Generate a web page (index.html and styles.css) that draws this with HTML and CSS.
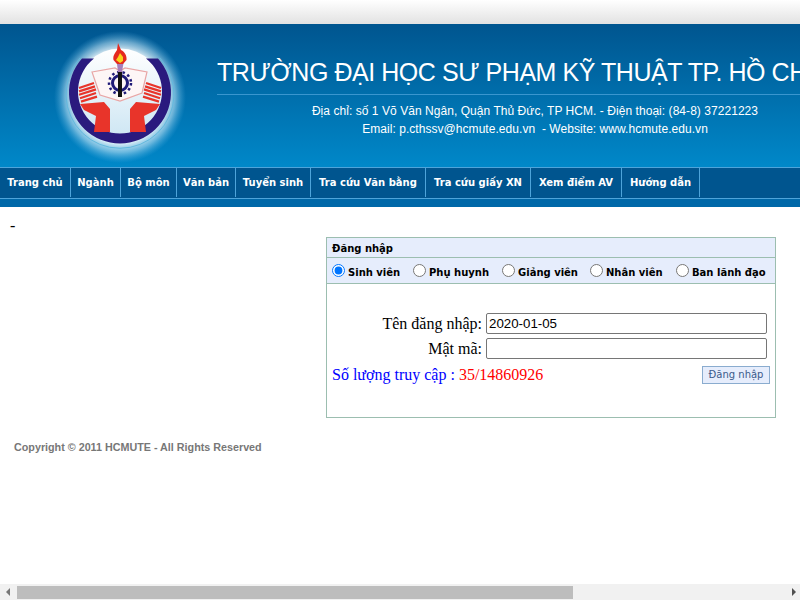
FILE: index.html
```html
<!DOCTYPE html>
<html lang="vi">
<head>
<meta charset="utf-8">
<title>Đăng nhập</title>
<link rel="stylesheet" href="styles.css">
</head>
<body>
<div class="page">
  <div class="topbar"></div>
  <header class="banner">
    <svg class="logo" width="217" height="143" viewBox="0 24 217 143" aria-hidden="true">
      <defs>
        <radialGradient id="glow" cx="120" cy="97" r="66" gradientUnits="userSpaceOnUse">
          <stop offset="0" stop-color="#fff"/>
          <stop offset="0.68" stop-color="#fff" stop-opacity="0.95"/>
          <stop offset="0.84" stop-color="#bfe4f6" stop-opacity="0.55"/>
          <stop offset="1" stop-color="#60b8e6" stop-opacity="0"/>
        </radialGradient>
        <linearGradient id="inner" x1="0" y1="0" x2="0" y2="1">
          <stop offset="0" stop-color="#fff"/>
          <stop offset="1" stop-color="#cfe7f4"/>
        </linearGradient>
      </defs>
      <circle cx="120" cy="97" r="66" fill="url(#glow)"/>
      <path d="M80 58A54 54 0 1 0 160 58" fill="none" stroke="#62b9de" stroke-width="1"/>
      <circle cx="120" cy="91.500" r="43" fill="url(#inner)"/>
      <path d="M82 58.500A51 51 0 1 0 158 58.500H146A42 42 0 1 1 94 58.500Z" fill="#2a1a7e"/>
      <path d="M92 72L115 68L120 71L125 68L147 72L142 93L120 101L100 95Z" fill="#fdf6f6" stroke="#e9a6a6" stroke-width="1.200"/>
      <g fill="none" stroke="#e8342a" stroke-width="2.200">
        <path d="M79 88L94 83M79 91.400L95 86.400M79 94.800L96 89.400M80 98.200L96 93M81 101.600L97 96.600"/>
        <path d="M161 88L146 83M161 91.400L145 86.400M161 94.800L144 89.400M160 98.200L144 93M159 101.600L143 96.600"/>
      </g>
      <g fill="#e8342a">
        <path d="M80 104L104 102L110 109V132L94 132L96 116L84 110Z"/>
        <path d="M160 104L136 102L130 109V132L146 132L144 116L156 110Z"/>
      </g>
      <g fill="none" stroke="#1f1a78">
        <circle cx="120" cy="83" r="7.500" stroke-width="3"/>
        <circle cx="120" cy="83" r="11" stroke-width="2.500" stroke-dasharray="2.500 2.900"/>
      </g>
      <rect x="118" y="66" width="4" height="31" fill="#111"/>
      <path d="M116.500 60H124L122 72H118Z" fill="#a77db8"/>
      <path d="M118 43L121 50C125 52 127 56 126.500 60L123 64H117L113.500 60C112.500 55 116 52 117 50Z" fill="#e5291f"/>
      <path d="M120 53L123 57L123 61L120 63L116 60L118 57Z" fill="#f8d21c"/>
    </svg>
    <div class="heading">
      <h1 class="school">TRƯỜNG ĐẠI HỌC SƯ PHẠM KỸ THUẬT TP. HỒ CHÍ MINH</h1>
      <p class="info">Địa chỉ: số 1 Võ Văn Ngân, Quận Thủ Đức, TP HCM. - Điện thoại: (84-8) 37221223</p>
      <p class="info">Email: p.cthssv@hcmute.edu.vn&nbsp; - Website: www.hcmute.edu.vn</p>
    </div>
  </header>
  <nav class="menu">
    <a class="menu-item" href="#">Trang chủ</a>
    <a class="menu-item" href="#">Ngành</a>
    <a class="menu-item" href="#">Bộ môn</a>
    <a class="menu-item" href="#">Văn bản</a>
    <a class="menu-item" href="#">Tuyển sinh</a>
    <a class="menu-item" href="#">Tra cứu Văn bằng</a>
    <a class="menu-item" href="#">Tra cứu giấy XN</a>
    <a class="menu-item" href="#">Xem điểm AV</a>
    <a class="menu-item" href="#">Hướng dẫn</a>
  </nav>
  <div class="strip"></div>
  <main class="content">
    <div class="dash">-</div>
    <section class="panel">
      <div class="panel-title">Đăng nhập</div>
      <div class="roles">
        <label class="role"><input type="radio" name="role" checked><span>Sinh viên</span></label>
        <label class="role"><input type="radio" name="role"><span>Phụ huynh</span></label>
        <label class="role"><input type="radio" name="role"><span>Giảng viên</span></label>
        <label class="role"><input type="radio" name="role"><span>Nhân viên</span></label>
        <label class="role"><input type="radio" name="role"><span>Ban lãnh đạo</span></label>
      </div>
      <form class="form">
        <label class="field-label" for="user">Tên đăng nhập:</label>
        <input class="field" id="user" type="text" value="2020-01-05">
        <label class="field-label" for="pass">Mật mã:</label>
        <input class="field" id="pass" type="password">
        <div class="form-foot">
          <span class="counter">Số lượng truy cập : <span class="count">35/14860926</span></span>
          <button class="submit" type="button">Đăng nhập</button>
        </div>
      </form>
    </section>
    <footer class="copyright">Copyright © 2011 HCMUTE - All Rights Reserved</footer>
  </main>
  <div class="scrollbar">
    <span class="arrow arrow-left"></span>
    <span class="thumb"></span>
    <span class="arrow arrow-right"></span>
  </div>
</div>
</body>
</html>
```
FILE: styles.css
```css
* { box-sizing: border-box; }
html, body { margin: 0; padding: 0; }
body { background: #fff; color: #000; font-family: "Liberation Serif", serif; overflow: hidden; }
.page { display: flex; flex-direction: column; width: 800px; height: 600px; overflow: hidden; }

.topbar { height: 24px; flex: none; background: linear-gradient(#fff, #e2e2e2); }

.banner { display: flex; height: 143px; flex: none; overflow: hidden;
  background: linear-gradient(#00558f, #0088c9); }
.logo { display: block; flex: none; }
.heading { flex: none; width: 636px; padding-top: 30px; color: #fff; text-align: center; }
.school { margin: 0 -60px 0 0; height: 41px; padding: 0; font: normal 25px/36px "Liberation Sans", sans-serif;
  letter-spacing: -0.45px; text-align: left; white-space: nowrap; border-bottom: 1px solid #3a96cf; }
.info { margin: 0; height: 18px; font: 12px/18px "Liberation Sans", sans-serif; letter-spacing: 0.05px; white-space: nowrap; }
.school + .info { margin-top: 7px; }

.menu { display: grid; grid-template-columns: 71px 50px 56px 59px 75px 115px 105px 91px 78px; height: 32px; flex: none;
  background: #00558f; border-top: 1px solid #4ea4da; border-bottom: 1px solid #4ea4da; }
.menu-item { display: block; height: 29px; border-right: 1px solid #4ea4da; text-align: center;
  color: #fff; font: bold 10px/29px "DejaVu Sans", sans-serif; text-decoration: none; white-space: nowrap; }
.strip { height: 8px; flex: none; background: #0068a8; }

.content { flex: 1; min-height: 0; }
.dash { height: 30px; padding: 10px 0 0 10px; font-size: 16px; line-height: 18px; }

.panel { width: 450px; height: 181px; margin-left: 326px; border: 1px solid #9cbeb0; }
.panel-title { height: 20px; padding-left: 5px; background: #e6edfc; border-bottom: 1px solid #9cbeb0;
  font: bold 10px/21px "DejaVu Sans", sans-serif; }
.roles { display: grid; grid-template-columns: 81px 89px 88px 86px 1fr; height: 26px; padding-left: 5px;
  background: #e6edfc; border-bottom: 1px solid #9cbeb0; }
.role { display: flex; align-items: flex-start; height: 25px; white-space: nowrap;
  font: bold 10px/29px "DejaVu Sans", sans-serif; }
.role input { flex: none; width: 13px; height: 13px; margin: 6px 3px 0 0; }

.form { display: grid; grid-template-columns: 155px 281px 1fr; column-gap: 4px; row-gap: 4px;
  padding-top: 29px; align-items: center; }
.field-label { grid-column: 1; font-size: 16px; text-align: right; }
.field { grid-column: 2; height: 21px; padding: 1px 2px; border: 1px solid #767676; border-radius: 2px; background: #fff;
  font: 13.3px "Liberation Sans", sans-serif; }
.form-foot { grid-column: 1 / -1; display: flex; justify-content: space-between; align-items: flex-start;
  padding: 0 5px; }
.counter { color: #00f; font-size: 16px; line-height: 24px; }
.count { color: #f00; }
.submit { width: 68px; height: 18px; margin-top: 3px; padding: 0; border: 1px solid #8aaccf; background: #e6edfc;
  color: #3a5a8a; font: 10px/16px "DejaVu Sans", sans-serif; }

.copyright { padding: 22px 0 0 14px; color: #777; font: bold 10.750px/14px "Liberation Sans", sans-serif; }

.scrollbar { display: flex; align-items: center; height: 16px; flex: none; background: #f1f1f1; }
.thumb { width: 556px; height: 13px; margin-left: 7px; background: #bdbdbd; }
.arrow { width: 0; height: 0; border-top: 4px solid transparent; border-bottom: 4px solid transparent; }
.arrow-left { margin-left: 6px; border-right: 4px solid #777; }
.arrow-right { margin-left: auto; margin-right: 4px; border-left: 4px solid #505050; }
```
